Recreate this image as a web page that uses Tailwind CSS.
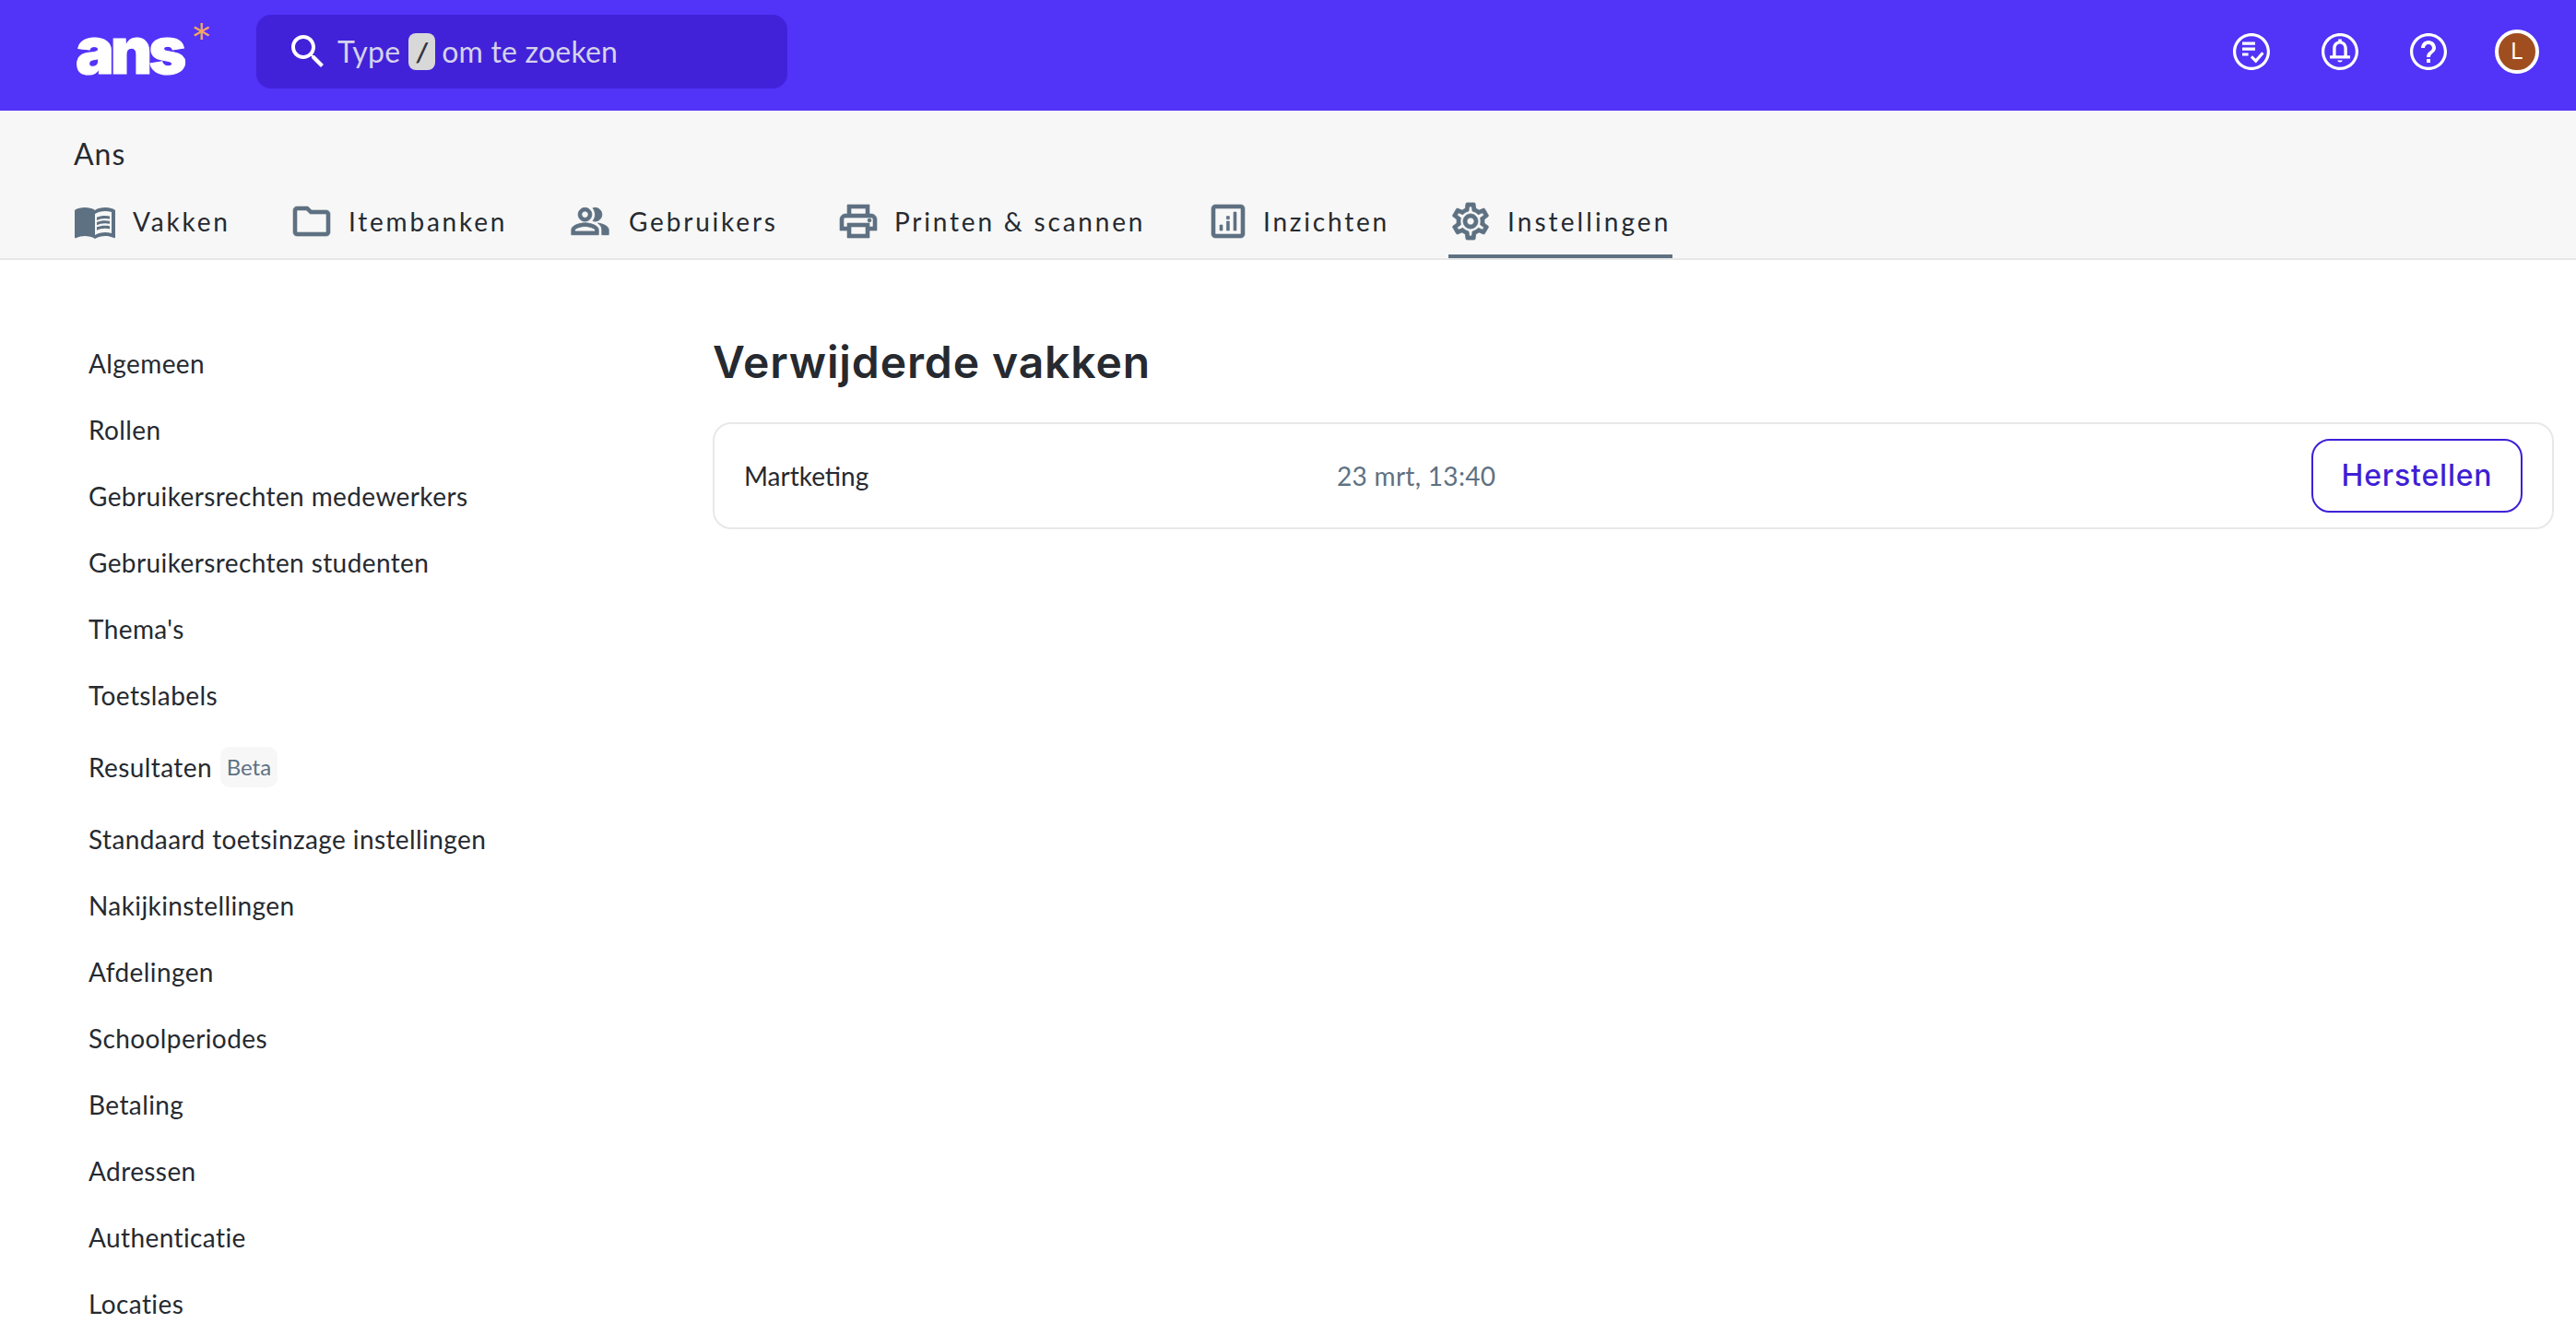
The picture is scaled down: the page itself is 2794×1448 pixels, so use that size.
<!DOCTYPE html>
<html lang="nl">
<head>
<meta charset="utf-8">
<title>Verwijderde vakken</title>
<script src="https://cdn.jsdelivr.net/npm/@tailwindcss/browser@4"></script>
</head>
<body class="bg-white h-[1448px] overflow-hidden font-['Lato','Noto_Sans',sans-serif] text-[#262a30]">
<header class="h-[120px] bg-[#5233f8] flex items-center pl-[82px] pr-[40px] pb-[8px]">
  <div class="w-[196px] h-[80px] flex items-start">
    <span class="font-['Inter',sans-serif] font-black text-white text-[70px] leading-[78px] tracking-[-4px] [-webkit-text-stroke:1px_white]">ans</span>
    <span class="font-['Inter',sans-serif] font-light text-[#f5a75e] text-[44px] leading-[50px] ml-[9px]">*</span>
  </div>
  <div class="w-[576px] h-[80px] rounded-2xl bg-[#4222d9] flex items-center pl-[32px] text-[32px] tracking-[0.2px] text-[#d4d3ea]">
    <svg class="w-[48px] h-[48px] shrink-0 fill-white" viewBox="0 0 24 24"><path d="M15.500 14h-.79l-.28-.27C15.410 12.590 16 11.110 16 9.500 16 5.910 13.090 3 9.500 3S3 5.910 3 9.500 5.910 16 9.500 16c1.610 0 3.090-.59 4.230-1.570l.27.28v.79l5 4.990L20.490 19l-4.990-5zm-6 0C7.010 14 5 11.990 5 9.500S7.010 5 9.500 5 14 7.010 14 9.500 11.990 14 9.500 14z"/></svg>
    <span class="ml-[8px]">Type</span>
    <span class="ml-[9px] w-[29px] h-[40px] rounded-lg bg-[#d8d8d8] text-[#33363d] text-[28px] font-bold flex items-center justify-center italic">/</span>
    <span class="ml-[7px]">om te zoeken</span>
  </div>
  <div class="ml-auto flex items-center gap-[48px]">
    <svg class="w-[48px] h-[48px] fill-white" viewBox="0 0 24 24"><path fill-rule="evenodd" d="M12 2C6.480 2 2 6.480 2 12s4.480 10 10 10 10-4.480 10-10S17.520 2 12 2zm0 18.400c-4.640 0-8.400-3.760-8.400-8.400S7.360 3.600 12 3.600s8.400 3.760 8.400 8.400-3.760 8.400-8.400 8.400z"/><path d="M7 6.800h7v1.600H7zM7 9.800h7v1.600H7zM7 12.700h3.300v1.600H7z"/><path d="M11.400 15.200l1.100-1.100 1.800 1.800 3.300-3.800 1.200 1-4.400 5.100z"/></svg>
    <svg class="w-[48px] h-[48px] fill-white" viewBox="0 0 24 24"><path fill-rule="evenodd" d="M12 2C6.480 2 2 6.480 2 12s4.480 10 10 10 10-4.480 10-10S17.520 2 12 2zm0 18.400c-4.640 0-8.400-3.760-8.400-8.400S7.360 3.600 12 3.600s8.400 3.760 8.400 8.400-3.760 8.400-8.400 8.400z"/><path fill-rule="evenodd" d="M11.100 5.200h1.800v1.100c1.900.4 3 2 3 3.900v3.900H17.500v1.600h-11v-1.600h1.600v-3.900c0-1.900 1.100-3.500 3-3.900V5.200zM12 7.700c-1.300 0-2.200 1.100-2.200 2.500v3.900h4.400v-3.900c0-1.400-.9-2.500-2.200-2.500z"/><path d="M10.600 16.800h2.800c-.1.6-.7 1-1.400 1s-1.300-.4-1.400-1z"/></svg>
    <svg class="w-[48px] h-[48px] fill-white" viewBox="0 0 24 24"><path fill-rule="evenodd" d="M12 2C6.480 2 2 6.480 2 12s4.480 10 10 10 10-4.480 10-10S17.520 2 12 2zm0 18.400c-4.640 0-8.400-3.760-8.400-8.400S7.360 3.600 12 3.600s8.400 3.760 8.400 8.400-3.760 8.400-8.400 8.400z"/><path d="M11 18h2v-2h-2v2zM12 6c-2.210 0-4 1.790-4 4h2c0-1.100.9-2 2-2s2 .9 2 2c0 2-3 1.750-3 5h2c0-2.250 3-2.500 3-5 0-2.210-1.790-4-4-4z"/></svg>
    <div class="w-[48px] h-[48px] rounded-full border-4 border-white bg-[#a04d20] flex items-center justify-center text-white text-[24px] font-['Inter',sans-serif]">L</div>
  </div>
</header>

<section class="h-[162px] bg-[#f7f7f7] border-b-2 border-[#e8e8e8] flex flex-col justify-between pl-[80px]">
  <h2 class="text-[32px] tracking-[1px] leading-[40px] pt-[27px] h-[67px]">Ans</h2>
  <nav class="flex h-[60px] items-stretch text-[28px] tracking-[0.1em]">
    <a class="flex items-center gap-[17px] w-[239px] -ml-[1px] pb-[20px]">
      <svg class="w-[48px] h-[48px] fill-[#5e7182] shrink-0" viewBox="0 0 24 24"><path d="M21 5c-1.110-.35-2.330-.5-3.500-.5-1.950 0-4.050.4-5.500 1.500-1.450-1.100-3.550-1.500-5.500-1.500S2.450 4.900 1 6v14.650c0 .25.25.5.5.5.1 0 .15-.05.25-.05C3.100 20.450 5.050 20 6.500 20c1.950 0 4.050.4 5.500 1.500 1.350-.85 3.800-1.500 5.500-1.500 1.650 0 3.350.3 4.750 1.050.1.05.15.05.25.05.25 0 .5-.25.5-.5V6c-.6-.45-1.250-.75-2-1zm0 13.500c-1.100-.35-2.300-.5-3.500-.5-1.700 0-4.150.65-5.500 1.500V8c1.350-.85 3.800-1.500 5.500-1.500 1.200 0 2.400.15 3.500.5v11.500z"/><path d="M17.500 10.500c.88 0 1.730.09 2.500.26V9.240c-.79-.15-1.640-.24-2.500-.24-1.700 0-3.240.29-4.500.83v1.660c1.130-.64 2.700-.99 4.500-.99zM13 12.490v1.660c1.130-.64 2.700-.99 4.500-.99.88 0 1.730.09 2.500.26V11.900c-.79-.15-1.640-.24-2.500-.24-1.700 0-3.240.3-4.500.83zM17.500 14.330c-1.700 0-3.240.29-4.500.83v1.660c1.130-.64 2.700-.99 4.500-.99.88 0 1.730.09 2.500.26v-1.520c-.79-.16-1.640-.24-2.500-.24z"/></svg>
      Vakken
    </a>
    <a class="flex items-center gap-[16px] w-[304px] -ml-[4px] pb-[20px]">
      <svg class="w-[48px] h-[48px] fill-[#5e7182] stroke-[#5e7182] stroke-[0.3] shrink-0" viewBox="0 0 24 24"><path d="M9.170 6l2 2H20v10H4V6h5.170M10 4H4c-1.100 0-1.990.9-1.990 2L2 18c0 1.100.9 2 2 2h16c1.100 0 2-.9 2-2V8c0-1.100-.9-2-2-2h-8l-2-2z"/></svg>
      Itembanken
    </a>
    <a class="flex items-center gap-[20px] w-[289px] pb-[20px]">
      <svg class="w-[44px] h-[44px] fill-[#5e7182] stroke-[#5e7182] stroke-[0.5] shrink-0" viewBox="0 0 24 24"><path d="M16.670 13.130C18.040 14.060 19 15.320 19 17v3h4v-3c0-2.180-3.570-3.470-6.330-3.870z"/><path d="M15 12c2.210 0 4-1.790 4-4s-1.790-4-4-4c-.47 0-.91.1-1.330.24C14.500 5.270 15 6.580 15 8s-.5 2.730-1.330 3.760c.42.14.86.24 1.330.24z"/><path d="M9 12c2.210 0 4-1.790 4-4s-1.790-4-4-4-4 1.790-4 4 1.790 4 4 4zm0-6c1.100 0 2 .9 2 2s-.9 2-2 2-2-.9-2-2 .9-2 2-2z"/><path d="M9 13c-2.670 0-8 1.340-8 4v3h16v-3c0-2.660-5.330-4-8-4zm6 5H3v-.99C3.200 16.290 6.300 15 9 15s5.800 1.290 6 2v1z"/></svg>
      Gebruikers
    </a>
    <a class="flex items-center gap-[15px] w-[401px] pb-[20px]">
      <svg class="w-[48px] h-[48px] fill-[#5e7182] stroke-[#5e7182] stroke-[0.3] shrink-0" viewBox="0 0 24 24"><path d="M19 8h-1V3H6v5H5c-1.660 0-3 1.340-3 3v6h4v4h12v-4h4v-6c0-1.660-1.340-3-3-3zM8 5h8v3H8V5zm8 12v2H8v-4h8v2zm2-2v-2H6v2H4v-4c0-.55.45-1 1-1h14c.55 0 1 .45 1 1v4h-2z"/><circle cx="18" cy="11.500" r="1"/></svg>
      Printen &amp; scannen
    </a>
    <a class="flex items-center gap-[14px] w-[263px] pb-[20px]">
      <svg class="w-[48px] h-[48px] fill-[#5e7182] stroke-[#5e7182] stroke-[0.3] shrink-0" viewBox="0 0 24 24"><path d="M19 3H5c-1.100 0-2 .9-2 2v14c0 1.100.9 2 2 2h14c1.100 0 2-.9 2-2V5c0-1.100-.9-2-2-2zm0 16H5V5h14v14z"/><path d="M7.500 14h1.500v3H7.500zM11.200 12h1.500v5h-1.500zM11.200 9.300h1.500v1.600h-1.500zM15 7h1.500v10H15z"/></svg>
      Inzichten
    </a>
    <a class="flex items-center gap-[16px] w-[243px] pb-[16px] border-b-4 border-[#5e7182] tracking-[0.11em]">
      <svg class="w-[48px] h-[48px] fill-[#5e7182] stroke-[#5e7182] stroke-[0.4] shrink-0" viewBox="0 0 24 24"><path d="M19.430 12.980c.04-.32.07-.64.07-.98 0-.34-.03-.66-.07-.98l2.110-1.650c.19-.15.24-.42.12-.64l-2-3.460c-.09-.16-.26-.25-.44-.25-.06 0-.12.01-.17.03l-2.490 1c-.52-.4-1.080-.73-1.690-.98l-.38-2.650C14.460 2.180 14.250 2 14 2h-4c-.25 0-.46.18-.49.42l-.38 2.650c-.61.25-1.170.59-1.690.98l-2.490-1c-.06-.02-.12-.03-.18-.03-.17 0-.34.09-.43.25l-2 3.460c-.13.22-.07.49.12.64l2.110 1.650c-.04.32-.07.65-.07.98 0 .33.03.66.07.98l-2.110 1.650c-.19.15-.24.42-.12.64l2 3.460c.09.16.26.25.44.25.06 0 .12-.01.17-.03l2.490-1c.52.4 1.080.73 1.690.98l.38 2.650c.03.24.24.42.49.42h4c.25 0 .46-.18.49-.42l.38-2.650c.61-.25 1.170-.59 1.690-.98l2.490 1c.06.02.12.03.18.03.17 0 .34-.09.43-.25l2-3.460c.12-.22.07-.49-.12-.64l-2.110-1.650zm-1.980-1.710c.04.31.05.52.05.73 0 .21-.02.43-.05.73l-.14 1.130.89.7 1.080.84-.7 1.210-1.270-.51-1.040-.42-.9.68c-.43.32-.84.56-1.250.73l-1.060.43-.16 1.130-.2 1.350h-1.400l-.19-1.350-.16-1.130-1.060-.43c-.43-.18-.83-.41-1.230-.71l-.91-.7-1.060.43-1.270.51-.7-1.210 1.080-.84.89-.7-.14-1.130c-.03-.31-.05-.54-.05-.74s.02-.43.05-.73l.14-1.130-.89-.7-1.080-.84.7-1.210 1.270.51 1.040.42.9-.68c.43-.32.84-.56 1.250-.73l1.060-.43.16-1.130.2-1.350h1.390l.19 1.350.16 1.130 1.060.43c.43.18.83.41 1.230.71l.91.7 1.060-.43 1.270-.51.7 1.210-1.070.85-.89.7.14 1.130zM12 8c-2.210 0-4 1.790-4 4s1.790 4 4 4 4-1.790 4-4-1.790-4-4-4zm0 6c-1.100 0-2-.9-2-2s.9-2 2-2 2 .9 2 2-.9 2-2 2z"/></svg>
      Instellingen
    </a>
  </nav>
</section>

<div class="flex">
  <aside class="w-[773px] shrink-0 pl-[96px] pt-[76px] text-[28px] tracking-[0.4px]">
    <ul>
      <li class="h-[72px] flex items-center">Algemeen</li>
      <li class="h-[72px] flex items-center">Rollen</li>
      <li class="h-[72px] flex items-center">Gebruikersrechten medewerkers</li>
      <li class="h-[72px] flex items-center">Gebruikersrechten studenten</li>
      <li class="h-[72px] flex items-center">Thema's</li>
      <li class="h-[72px] flex items-center">Toetslabels</li>
      <li class="h-[84px] flex items-center">Resultaten<span class="ml-[9px] h-[44px] w-[62px] rounded-[10px] bg-[#f7f7f7] text-[#5e7182] text-[24px] tracking-normal flex items-center justify-center">Beta</span></li>
      <li class="h-[72px] flex items-center">Standaard toetsinzage instellingen</li>
      <li class="h-[72px] flex items-center">Nakijkinstellingen</li>
      <li class="h-[72px] flex items-center">Afdelingen</li>
      <li class="h-[72px] flex items-center">Schoolperiodes</li>
      <li class="h-[72px] flex items-center">Betaling</li>
      <li class="h-[72px] flex items-center">Adressen</li>
      <li class="h-[72px] flex items-center">Authenticatie</li>
      <li class="h-[72px] flex items-center">Locaties</li>
    </ul>
  </aside>
  <main class="flex-1 pr-[24px] pt-[76px]">
    <h1 class="font-['Inter',sans-serif] font-semibold text-[48px] leading-[70px] h-[100px] tracking-[0.9px]">Verwijderde vakken</h1>
    <div class="h-[116px] border-2 border-[#e8e8e8] rounded-[20px] flex items-center pl-[32px] pr-[32px] text-[28px]">
      <span class="w-[643px]">Martketing</span>
      <span class="text-[#5e7182] tracking-[0.3px]">23 mrt, 13:40</span>
      <button class="ml-auto w-[229px] h-[80px] border-2 border-[#3f1fd6] rounded-[20px] text-[#3f1fd6] text-[32px] tracking-[0.8px] font-medium font-['Inter',sans-serif]">Herstellen</button>
    </div>
  </main>
</div>
</body>
</html>
